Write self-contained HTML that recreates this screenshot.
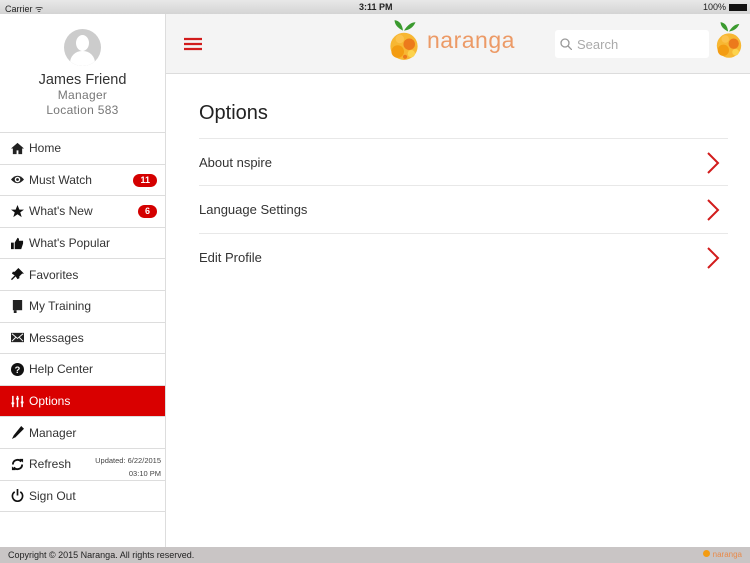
<!DOCTYPE html>
<html><head><meta charset="utf-8"><style>
*{margin:0;padding:0;box-sizing:border-box}
body{width:750px;height:563px;overflow:hidden;font-family:"Liberation Sans",sans-serif;background:#fff;position:relative;color:#222}
.status{position:absolute;top:0;left:0;width:750px;height:14px;background:linear-gradient(#e8e8e8,#d4d4d4);font-size:9px;}
.status span{position:absolute;top:2px}
.side{position:absolute;top:14px;left:0;width:166px;height:533px;border-right:1px solid #ddd;background:#fff}
.prof{height:119px;border-bottom:1px solid #ddd;text-align:center;padding-top:15px}
.av{width:37px;height:37px;border-radius:50%;background:#ccc;margin:0 auto;position:relative;overflow:hidden}
.name{font-size:14.5px;color:#333;margin-top:6px}
.sub{font-size:12px;color:#777;line-height:15px;letter-spacing:.3px}
.item{height:31.6px;border-bottom:1px solid #ddd;display:flex;align-items:center;padding-left:11px;font-size:12px;color:#333;position:relative}
.item svg{width:13px;height:13px;margin-right:5px}
.item.act{background:#d90000;color:#fff}
.badge{position:absolute;right:8px;top:9px;background:#d40000;color:#fff;font-size:9px;border-radius:7px;height:13px;line-height:13px;padding:0 7px;font-weight:bold}
.hdr{position:absolute;top:14px;left:166px;width:584px;height:60px;background:#f4f4f4;border-bottom:1px solid #dcdcdc}
.search{position:absolute;left:389px;top:16px;width:154px;height:28px;background:#fff;border-radius:3px;font-size:13px;color:#aaa;padding:7px 0 0 22px}
h1{position:absolute;left:199px;top:102px;font-size:20px;font-weight:normal;color:#222}
.row{position:absolute;left:199px;width:529px;height:48px;border-top:1px solid #e8e8e8;font-size:13px;color:#333;padding-top:16px}
.row svg{position:absolute;right:8px;top:13px}
.foot{position:absolute;top:547px;left:0;width:750px;height:16px;background:#c9c5c5;font-size:9px;color:#222;padding:3px 0 0 8px}
</style></head><body>
<div class="status"><span style="left:5px">Carrier ᯤ</span><span style="left:359px;font-weight:bold">3:11 PM</span><span style="left:703px">100% <b style="display:inline-block;width:18px;height:7px;background:#111;vertical-align:middle"></b></span></div>
<div class="side">
<div class="prof"><div class="av"><div style="position:absolute;left:12px;top:6px;width:13px;height:16px;border-radius:50%;background:#fff"></div><div style="position:absolute;left:6px;top:22px;width:25px;height:20px;border-radius:12px 12px 0 0;background:#fff"></div></div>
<div class="name">James Friend</div><div class="sub">Manager</div><div class="sub">Location 583</div></div>
<div class="item"><svg viewBox="0 0 14 14"><path d="M7 1L0 7h2v6h4V9h2v4h4V7h2z" fill="#222"/></svg>Home</div>
<div class="item"><svg viewBox="0 0 14 14"><path d="M0 7Q7-1 14 7Q7 15 0 7z" fill="#222"/><circle cx="7" cy="7" r="3" fill="#fff"/><circle cx="7" cy="7" r="1.5" fill="#222"/></svg>Must Watch<span class="badge">11</span></div>
<div class="item"><svg viewBox="0 0 14 14"><path d="M7 0l2 5h5l-4 3 1.5 5L7 10l-4.5 3L4 8 0 5h5z" fill="#111"/></svg>What's New<span class="badge">6</span></div>
<div class="item"><svg viewBox="0 0 14 14"><path d="M0 6h3v7H0zM4 6l3-5c1 0 2 1 1.5 3H13v3l-2 6H4z" fill="#111"/></svg>What's Popular</div>
<div class="item"><svg viewBox="0 0 14 14"><path d="M8 0l6 6-2 0-3 3 0 2-2 1-2-3-4 4-1-1 4-4-3-2 1-2h2l3-3z" fill="#111"/></svg>Favorites</div>
<div class="item"><svg viewBox="0 0 14 14"><rect x="2" y="0" width="10" height="11" fill="#222"/><rect x="3" y="11" width="3" height="3" fill="#222"/></svg>My Training</div>
<div class="item"><svg viewBox="0 0 14 14"><rect x="0" y="2" width="14" height="10" fill="#222"/><path d="M1 3l6 5 6-5M1 11l4-4M13 11l-4-4" stroke="#fff" fill="none"/></svg>Messages</div>
<div class="item"><svg viewBox="0 0 14 14"><circle cx="7" cy="7" r="7" fill="#111"/><text x="7" y="11" font-size="10" fill="#fff" text-anchor="middle" font-weight="bold" font-family="Liberation Sans">?</text></svg>Help Center</div>
<div class="item act"><svg viewBox="0 0 14 14"><path d="M2 1v12M7 1v12M12 1v12" stroke="#fff" stroke-width="1.6"/><rect x="0.5" y="8" width="3" height="2" fill="#fff"/><rect x="5.5" y="3" width="3" height="2" fill="#fff"/><rect x="10.5" y="7" width="3" height="2" fill="#fff"/></svg>Options</div>
<div class="item"><svg viewBox="0 0 14 14"><path d="M11 0l3 3-9 9-4 2 2-4z" fill="#111"/></svg>Manager</div>
<div class="item"><svg viewBox="0 0 14 14"><path d="M2 7a5 5 0 0 1 9-3M12 7a5 5 0 0 1-9 3" stroke="#111" stroke-width="2" fill="none"/><path d="M9 1l4 0 0 4zM5 13l-4 0 0-4z" fill="#111"/></svg>Refresh<span style="position:absolute;right:4px;top:5px;font-size:7.5px;color:#444;text-align:right;line-height:13px">Updated: 6/22/2015<br>03:10 PM</span></div>
<div class="item"><svg viewBox="0 0 14 14"><path d="M4 3a5.5 5.5 0 1 0 6 0" stroke="#111" stroke-width="1.8" fill="none"/><path d="M7 0v7" stroke="#111" stroke-width="1.8"/></svg>Sign Out</div>
</div>
<div class="hdr">
<svg style="position:absolute;left:18px;top:23px" width="18" height="14"><path d="M0 2h18M0 7h18M0 12h18" stroke="#d21c1c" stroke-width="2.2"/></svg>
<svg style="position:absolute;left:221px;top:3px" width="34" height="44" viewBox="0 0 32 42"><path d="M15 13q-8-4-8-10 7 1 8 10zM16 13q5-8 11-8-3 7-11 8z" fill="#3a9a2e"/><circle cx="16" cy="28" r="13" fill="#f7b733"/><circle cx="10" cy="33" r="6" fill="#f39c12"/><circle cx="21" cy="26" r="5.5" fill="#ec7a1c"/><circle cx="12" cy="21" r="4" fill="#fcc24d"/><circle cx="23" cy="35" r="3.5" fill="#fcd34d"/><circle cx="17" cy="38" r="2" fill="#ec7a1c"/></svg>
<div style="position:absolute;left:261px;top:13px;font-size:23px;color:#ec9a66;letter-spacing:.5px">naranga</div>
<div class="search"><svg style="position:absolute;left:5px;top:8px" width="12" height="12"><circle cx="5" cy="5" r="4" stroke="#999" fill="none" stroke-width="1.3"/><path d="M8 8l4 4" stroke="#999" stroke-width="1.3"/></svg>Search</div>
<svg style="position:absolute;left:548px;top:5px" width="30" height="40" viewBox="0 0 32 42"><path d="M15 13q-8-4-8-10 7 1 8 10zM16 13q5-8 11-8-3 7-11 8z" fill="#3a9a2e"/><circle cx="16" cy="28" r="13" fill="#f7b733"/><circle cx="10" cy="33" r="6" fill="#f39c12"/><circle cx="21" cy="26" r="5.5" fill="#ec7a1c"/><circle cx="12" cy="21" r="4" fill="#fcc24d"/><circle cx="23" cy="35" r="3.5" fill="#fcd34d"/></svg>
</div>
<h1>Options</h1>
<div class="row" style="top:138px">About nspire<svg width="14" height="22"><path d="M2 1l10 10-10 10" stroke="#d21c1c" stroke-width="2" fill="none"/></svg></div>
<div class="row" style="top:185px">Language Settings<svg width="14" height="22"><path d="M2 1l10 10-10 10" stroke="#d21c1c" stroke-width="2" fill="none"/></svg></div>
<div class="row" style="top:233px">Edit Profile<svg width="14" height="22"><path d="M2 1l10 10-10 10" stroke="#d21c1c" stroke-width="2" fill="none"/></svg></div>
<div class="foot">Copyright © 2015 Naranga. All rights reserved.<span style="position:absolute;right:8px;top:3px;color:#e88a4a;font-size:8px"><b style="display:inline-block;width:7px;height:7px;border-radius:50%;background:#f39c12"></b> naranga</span></div>
</body></html>
